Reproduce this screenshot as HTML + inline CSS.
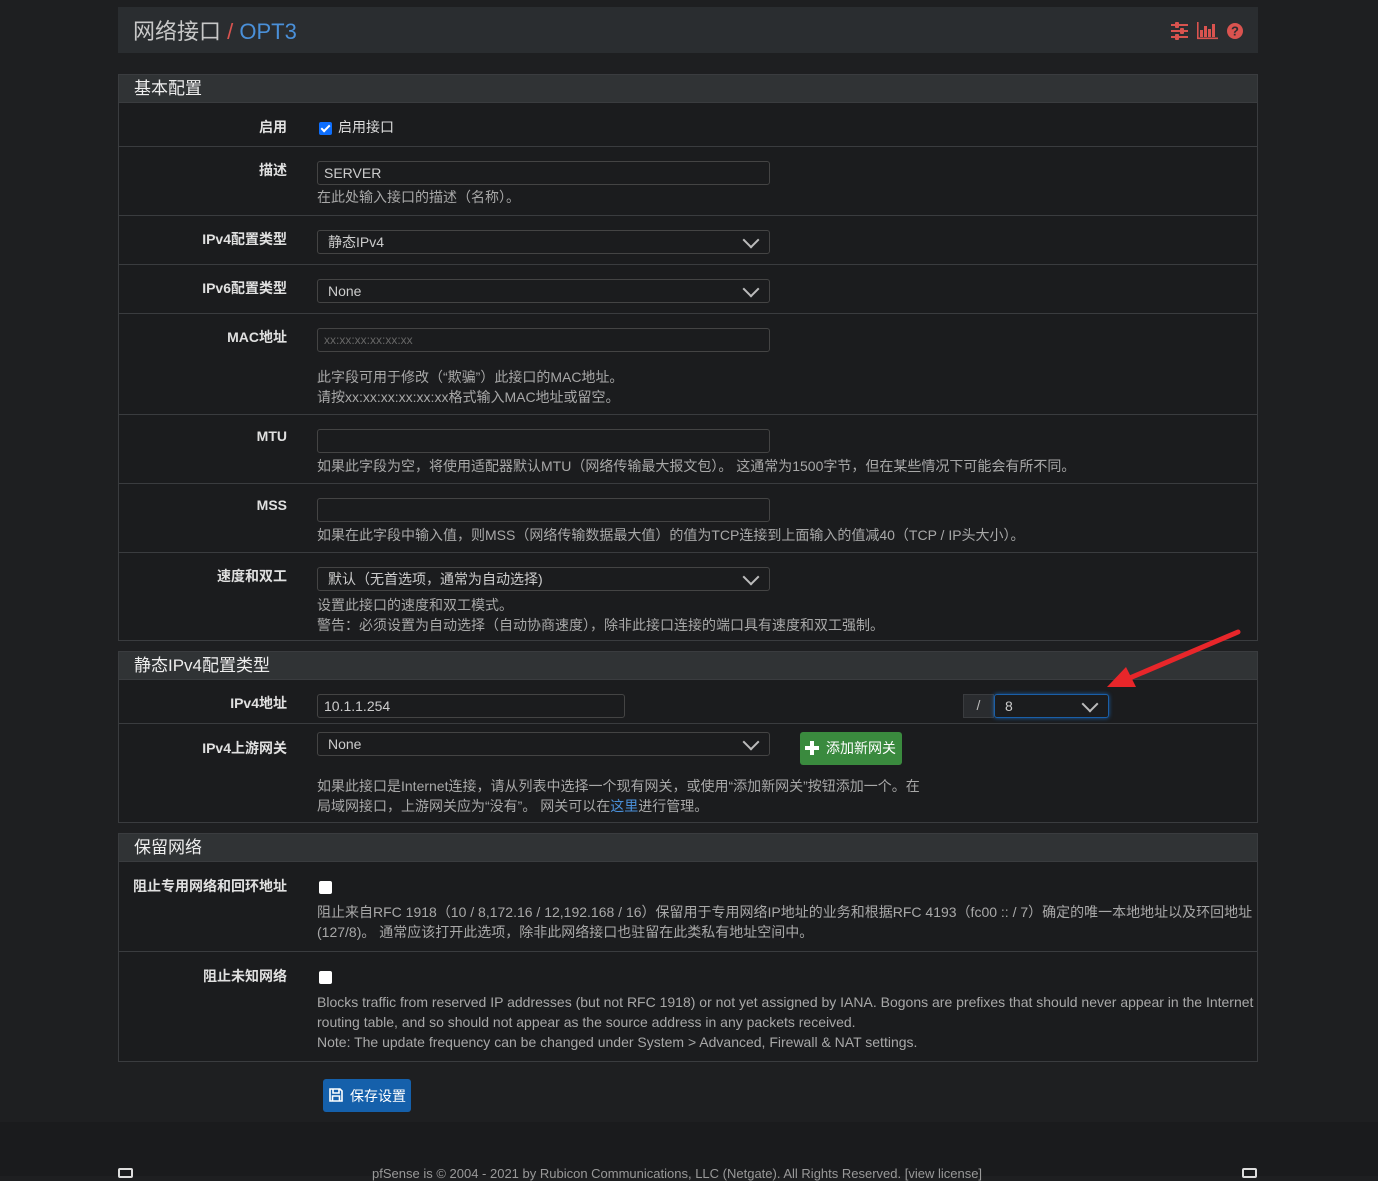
<!DOCTYPE html>
<html><head><meta charset="utf-8"><style>
*{box-sizing:border-box;margin:0;padding:0}
body{width:1378px;height:1176px;background:#1e1f21;font-family:"Liberation Sans","Noto Sans CJK SC",sans-serif;color:#bdbdbd;font-size:14px;position:relative;overflow:hidden}
.a{position:absolute}
.hdr{left:118px;top:7px;width:1140px;height:46px;background:#2a2d30}
.hdr .t{left:15px;top:7px;font-size:22px;color:#c8c8c8;white-space:nowrap}
.panel{position:absolute;left:118px;width:1140px;border:1px solid #3a3c3f;background:#1b1c1e}
.ph{height:28px;background:#303335;border-bottom:1px solid #3a3c3f;color:#eee;font-size:17px;padding:1px 15px;line-height:26px}
.row{position:relative;border-bottom:1px solid #3a3c3f}
.row:last-child{border-bottom:none}
.lab{position:absolute;right:970px;font-weight:bold;color:#e0e0e0;font-size:14px;white-space:nowrap}
.inp{position:absolute;left:198px;width:453px;height:24px;border:1px solid #444;border-radius:3px;background:#1b1c1e;color:#ccc;font-size:14px;padding:2px 6px;line-height:19px}
.sel{padding-left:10px}
.sel:after{content:"";position:absolute;right:12px;top:3px;width:10px;height:10px;border-right:2px solid #bbb;border-bottom:2px solid #bbb;transform:rotate(45deg)}
.hlp{position:absolute;left:198px;color:#a8a8a8;font-size:14px;line-height:20px;white-space:nowrap}
.cb{position:absolute;left:200px;width:13px;height:13px;background:#fff;border-radius:2px}
.cb.on{background:#0d6efd}
.cb.on:after{content:"";position:absolute;left:4px;top:1px;width:3px;height:7px;border-right:2px solid #fff;border-bottom:2px solid #fff;transform:rotate(45deg)}
</style></head><body>
<div class="a hdr"><div class="a t">网络接口 <span style="color:#d9534f">/</span> <span style="color:#4a90d9">OPT3</span></div>
<svg class="a" style="left:1052px;top:14px" width="78" height="20" viewBox="0 0 78 20">
<g fill="#d9534f"><rect x="1" y="3" width="17" height="2"/><rect x="5" y="1" width="4" height="6" rx="1"/><rect x="1" y="9" width="17" height="2"/><rect x="10" y="7" width="4" height="6" rx="1"/><rect x="1" y="15" width="17" height="2"/><rect x="5" y="13" width="4" height="6" rx="1"/>
<rect x="27" y="1" width="1.6" height="17"/><rect x="27" y="16.5" width="21" height="1.6"/><rect x="30" y="9" width="3" height="7"/><rect x="34" y="5" width="3" height="11"/><rect x="38" y="8" width="3" height="8"/><rect x="42" y="3" width="3" height="13"/>
<circle cx="65" cy="10" r="8"/></g>
<text x="65" y="14.5" font-size="13" font-weight="bold" fill="#2a2d30" text-anchor="middle" font-family="Liberation Sans">?</text></svg>
</div>

<div class="panel" style="top:74px;height:567px">
<div class="ph">基本配置</div>
<div class="row" style="height:44px"><div class="lab" style="top:14px">启用</div><div class="cb on" style="top:19px"></div><div class="a" style="left:219px;top:14px;color:#ddd">启用接口</div></div>
<div class="row" style="height:69px"><div class="lab" style="top:13px">描述</div><div class="inp" style="top:14px">SERVER</div><div class="hlp" style="top:40px">在此处输入接口的描述（名称）。</div></div>
<div class="row" style="height:49px"><div class="lab" style="top:13px">IPv4配置类型</div><div class="inp sel" style="top:14px">静态IPv4</div></div>
<div class="row" style="height:49px"><div class="lab" style="top:13px">IPv6配置类型</div><div class="inp sel" style="top:14px">None</div></div>
<div class="row" style="height:101px"><div class="lab" style="top:13px">MAC地址</div><div class="inp" style="top:14px;color:#666;font-size:12px;padding-top:2px">xx:xx:xx:xx:xx:xx</div><div class="hlp" style="top:53px">此字段可用于修改（“欺骗”）此接口的MAC地址。<br>请按xx:xx:xx:xx:xx:xx格式输入MAC地址或留空。</div></div>
<div class="row" style="height:69px"><div class="lab" style="top:13px">MTU</div><div class="inp" style="top:14px"></div><div class="hlp" style="top:41px">如果此字段为空，将使用适配器默认MTU（网络传输最大报文包）。 这通常为1500字节，但在某些情况下可能会有所不同。</div></div>
<div class="row" style="height:69px"><div class="lab" style="top:13px">MSS</div><div class="inp" style="top:14px"></div><div class="hlp" style="top:41px">如果在此字段中输入值，则MSS（网络传输数据最大值）的值为TCP连接到上面输入的值减40（TCP / IP头大小）。</div></div>
<div class="row" style="height:88px"><div class="lab" style="top:13px">速度和双工</div><div class="inp sel" style="top:14px">默认（无首选项，通常为自动选择)</div><div class="hlp" style="top:42px">设置此接口的速度和双工模式。<br>警告：必须设置为自动选择（自动协商速度），除非此接口连接的端口具有速度和双工强制。</div></div>
</div>

<div class="panel" style="top:651px;height:172px">
<div class="ph">静态IPv4配置类型</div>
<div class="row" style="height:44px"><div class="lab" style="top:13px">IPv4地址</div><div class="inp" style="top:14px;width:308px">10.1.1.254</div>
<div class="a" style="left:844px;top:14px;width:31px;height:24px;background:#2a2c2f;border:1px solid #3a3c3f;color:#bbb;text-align:center;padding-top:2px">/</div>
<div class="inp sel" style="left:875px;top:14px;width:115px;border-color:#1a5fa8;box-shadow:0 0 4px #1a5fa8">8</div></div>
<div class="row" style="height:99px"><div class="lab" style="top:14px">IPv4上游网关</div><div class="inp sel" style="top:8px">None</div>
<div class="a" style="left:681px;top:8px;width:102px;height:33px;background:#3a8a3e;border-radius:3px;color:#fff;padding:6px 0 0 26px;font-size:14px">添加新网关<div class="a" style="left:5px;top:14px;width:14px;height:4px;background:#fff"></div><div class="a" style="left:10px;top:9px;width:4px;height:14px;background:#fff"></div></div>
<div class="hlp" style="top:52px">如果此接口是Internet连接，请从列表中选择一个现有网关，或使用“添加新网关”按钮添加一个。在<br>局域网接口，上游网关应为“没有”。 网关可以在<span style="color:#4a90d9">这里</span>进行管理。</div></div>
</div>

<div class="panel" style="top:833px;height:229px">
<div class="ph">保留网络</div>
<div class="row" style="height:90px"><div class="lab" style="top:14px">阻止专用网络和回环地址</div><div class="cb" style="top:19px"></div><div class="hlp" style="top:40px">阻止来自RFC 1918（10 / 8,172.16 / 12,192.168 / 16）保留用于专用网络IP地址的业务和根据RFC 4193（fc00 :: / 7）确定的唯一本地地址以及环回地址<br>(127/8)。 通常应该打开此选项，除非此网络接口也驻留在此类私有地址空间中。</div></div>
<div class="row" style="height:110px"><div class="lab" style="top:14px">阻止未知网络</div><div class="cb" style="top:19px"></div><div class="hlp" style="top:40px;line-height:20px">Blocks traffic from reserved IP addresses (but not RFC 1918) or not yet assigned by IANA. Bogons are prefixes that should never appear in the Internet<br>routing table, and so should not appear as the source address in any packets received.<br>Note: The update frequency can be changed under System &gt; Advanced, Firewall &amp; NAT settings.</div></div>
</div>

<div class="a" style="left:323px;top:1079px;width:88px;height:33px;background:#1560ab;border-radius:3px;color:#fff;padding:7px 0 0 27px">保存设置
<svg class="a" style="left:6px;top:9px" width="14" height="14" viewBox="0 0 14 14"><path d="M1 1h10l2 2v10H1z M4 1v4h6V1 M3.5 8h7v5h-7z" fill="none" stroke="#fff" stroke-width="1.6"/></svg></div>

<div class="a" style="left:0;top:1122px;width:1378px;height:54px;background:#1a1b1d"></div>
<div class="a" style="left:118px;top:1168px;width:15px;height:10px;border:2px solid #ddd;border-radius:2px"></div>
<div class="a" style="left:1242px;top:1168px;width:15px;height:10px;border:2px solid #ddd;border-radius:2px"></div>
<div class="a" style="left:372px;top:1166px;color:#999;font-size:13px;white-space:nowrap">pfSense is © 2004 - 2021 by Rubicon Communications, LLC (Netgate). All Rights Reserved. [view license]</div>

<svg class="a" style="left:1100px;top:625px" width="150" height="70" viewBox="0 0 150 70"><line x1="138" y1="7" x2="25" y2="55" stroke="#e8262a" stroke-width="5" stroke-linecap="round"/><polygon points="7,62 26,42 36,62" fill="#e8262a"/></svg>
</body></html>
